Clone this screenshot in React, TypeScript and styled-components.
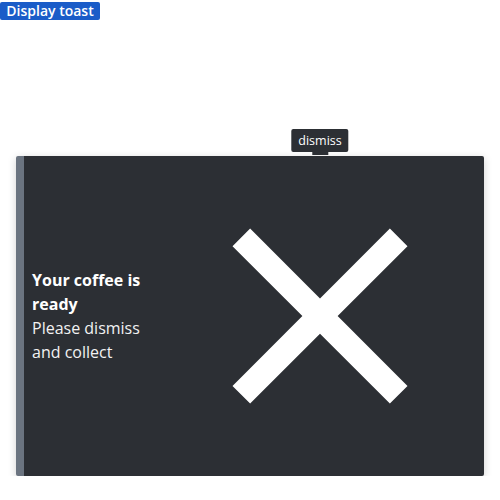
import styled, { createGlobalStyle } from 'styled-components';

const GlobalStyle = createGlobalStyle`
    body {
        margin: 0;
        font-family: "Open Sans", "Noto Sans", sans-serif;
        background: #ffffff;
    }
`

const Page = styled.div`
    display: flex;
    flex-direction: column;
    align-items: flex-start;
    padding-top: 2px;
`

const TriggerButton = styled.button`
    background-color: #1a5cc8;
    color: #ffffff;
    border: none;
    border-radius: 2px;
    font-family: "Open Sans", sans-serif;
    font-size: 14px;
    font-weight: 600;
    line-height: 18px;
    height: 18px;
    width: 100px;
    padding: 0;
`

const ToastArea = styled.div`
    align-self: stretch;
    padding: 136px 16px 0;
`

const Toast = styled.div`
    display: flex;
    height: 320px;
    background-color: #2c2f34;
    border-left: 8px solid #6b7480;
    border-radius: 2px;
    box-shadow: 0 2px 8px rgba(0, 0, 0, 0.18);
    color: #ffffff;
`

const Message = styled.div`
    width: 116px;
    padding: 0 8px;
    display: flex;
    flex-direction: column;
    justify-content: center;
    font-size: 16px;
    line-height: 24px;
`

const Title = styled.strong`
    font-weight: 700;
`

const Body = styled.span`
    color: #f2f2f2;
`

const DismissButton = styled.button`
    position: relative;
    flex: 1;
    background: none;
    border: none;
    padding: 0;
    display: flex;
    align-items: center;
    justify-content: center;
    color: #ffffff;
    cursor: pointer;
`

const Tooltip = styled.div`
    position: absolute;
    top: -27px;
    left: 50%;
    transform: translateX(-50%);
    background-color: #2c2f34;
    color: #ffffff;
    font-family: "Open Sans", sans-serif;
    font-size: 12.5px;
    line-height: 23px;
    padding: 0 7px;
    border-radius: 2px;
    white-space: nowrap;

    &::after {
        content: "";
        position: absolute;
        left: 50%;
        bottom: -3px;
        transform: translateX(-50%);
        width: 16px;
        height: 3px;
        background-color: #2c2f34;
    }
`

function CloseIcon() {
    return <svg width="300" height="300" viewBox="0 0 24 24" fill="currentColor">
        <path d="M19 6.41 17.59 5 12 10.59 6.41 5 5 6.41 10.59 12 5 17.59 6.41 19 12 13.41 17.59 19 19 17.59 13.41 12z" />
    </svg>;
}

function App() {
    return <Page>
        <GlobalStyle />
        <TriggerButton>Display toast</TriggerButton>
        <ToastArea>
            <Toast>
                <Message>
                    <Title>Your coffee is ready</Title>
                    <Body>Please dismiss and collect</Body>
                </Message>
                <DismissButton aria-label="dismiss">
                    <Tooltip>dismiss</Tooltip>
                    <CloseIcon />
                </DismissButton>
            </Toast>
        </ToastArea>
    </Page>;
}

export default App;
